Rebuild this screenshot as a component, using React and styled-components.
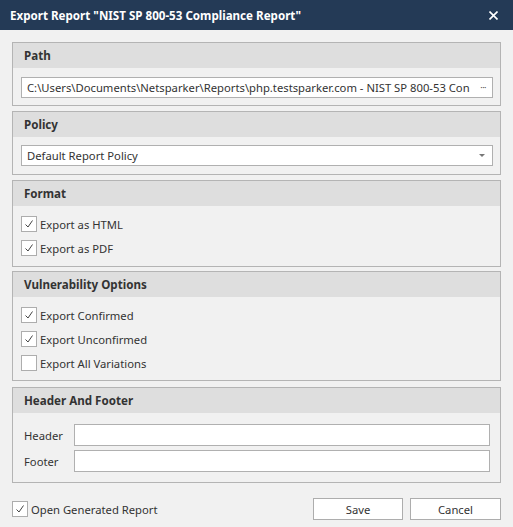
import React from "react";
import styled, { createGlobalStyle } from "styled-components";

const Global = createGlobalStyle`
  html, body { margin: 0; padding: 0; background: #f1f1f1; }
  body { font-family: "Segoe UI", "Noto Sans", "Open Sans", sans-serif; }
  * { box-sizing: border-box; }
`;

const Window = styled.div`
  width: 513px;
  height: 527px;
  background: #f1f1f1;
  display: flex;
  flex-direction: column;
  color: #333;
  font-size: 11.25px;
`;

const TitleBar = styled.div`
  height: 30px;
  flex: none;
  background: #243a56;
  color: #fff;
  display: flex;
  align-items: center;
  justify-content: space-between;
  padding: 0 15px 0 10px;
  font-weight: 700;
  font-size: 11.6px;
`;

const Close = styled.svg`
  width: 9px;
  height: 9px;
  display: block;
`;

const Body = styled.div`
  flex: none;
  padding: 12px 12px 0 12px;
  display: flex;
  flex-direction: column;
`;

const Panel = styled.section`
  border: 1px solid #b4b4b4;
  background: #f1f1f1;
  display: flex;
  flex-direction: column;
  margin-bottom: ${(p) => p.$after ?? 5}px;
`;

const PanelHeader = styled.div`
  height: 25px;
  background: #dedede;
  font-weight: 700;
  font-size: 11.6px;
  padding-left: 11px;
  display: flex;
  align-items: center;
`;

const PanelBody = styled.div`
  padding: ${(p) => p.$pad || "8px"};
  display: flex;
  flex-direction: column;
  gap: ${(p) => p.$gap || "0px"};
`;

const TextBox = styled.div`
  height: ${(p) => p.$h || 21}px;
  border: 1px solid #b0b0b0;
  background: #fff;
  display: flex;
  align-items: center;
  padding: 0 5px 0 5px;
  flex: ${(p) => (p.$grow ? 1 : "none")};
`;

const TextValue = styled.span`
  flex: 1;
  white-space: nowrap;
  color: #333;
`;

const Dots = styled.span`
  flex: none;
  color: #555;
  font-size: 9px;
  letter-spacing: -0.5px;
  line-height: 1;
  margin-right: 1px;
`;

const Arrow = styled.span`
  flex: none;
  width: 0;
  height: 0;
  border-left: 3px solid transparent;
  border-right: 3px solid transparent;
  border-top: 3px solid #777;
  margin-right: 2px;
`;

const CheckRow = styled.label`
  height: 24px;
  display: flex;
  align-items: center;
  gap: 3px;
`;

const Box = styled.span`
  width: 16px;
  height: 16px;
  border: 1px solid #adadad;
  background: #fff;
  display: flex;
  align-items: center;
  justify-content: center;
`;

const FieldRow = styled.div`
  display: flex;
  align-items: center;
  height: 22px;
`;

const FieldLabel = styled.span`
  width: 53px;
  padding-left: 3px;
`;

const Footer = styled.div`
  display: flex;
  align-items: center;
  justify-content: space-between;
  padding: 14px 12px 0 12px;
`;

const Buttons = styled.div`
  display: flex;
  gap: 7px;
`;

const Button = styled.button`
  width: ${(p) => p.$w || 90}px;
  height: 22px;
  border: 1px solid #adadad;
  background: #fff;
  font-family: inherit;
  font-size: 11.25px;
  color: #333;
  padding: 0;
`;

const Check = () => (
  <svg width="10" height="10" viewBox="0 0 10 10">
    <path d="M1.5 5.5 L4 8 L8.5 1.5" fill="none" stroke="#444" strokeWidth="1" />
  </svg>
);

const CheckBox = ({ checked, children }) => (
  <CheckRow>
    <Box>{checked && <Check />}</Box>
    <span>{children}</span>
  </CheckRow>
);

export default function App() {
  return (
    <Window>
      <Global />
      <TitleBar>
        <span>Export Report "NIST SP 800-53 Compliance Report"</span>
        <Close viewBox="0 0 9 9">
          <path d="M0.5 0.5 L8.5 8.5 M8.5 0.5 L0.5 8.5" stroke="#fff" strokeWidth="1.6" />
        </Close>
      </TitleBar>
      <Body>
        <Panel>
          <PanelHeader>Path</PanelHeader>
          <PanelBody $pad="9px 7px 7px 8px">
            <TextBox>
              <TextValue>
                C:\Users\Documents\Netsparker\Reports\php.testsparker.com - NIST SP 800-53 Con
              </TextValue>
              <Dots>···</Dots>
            </TextBox>
          </PanelBody>
        </Panel>
        <Panel>
          <PanelHeader>Policy</PanelHeader>
          <PanelBody $pad="8px 7px 8px 8px">
            <TextBox>
              <TextValue>Default Report Policy</TextValue>
              <Arrow />
            </TextBox>
          </PanelBody>
        </Panel>
        <Panel $after={4}>
          <PanelHeader>Format</PanelHeader>
          <PanelBody $pad="6px 8px 6px 8px">
            <CheckBox checked>Export as HTML</CheckBox>
            <CheckBox checked>Export as PDF</CheckBox>
          </PanelBody>
        </Panel>
        <Panel $after={6}>
          <PanelHeader>Vulnerability Options</PanelHeader>
          <PanelBody $pad="6px 8px 5px 8px">
            <CheckBox checked>Export Confirmed</CheckBox>
            <CheckBox checked>Export Unconfirmed</CheckBox>
            <CheckBox>Export All Variations</CheckBox>
          </PanelBody>
        </Panel>
        <Panel $after={0}>
          <PanelHeader>Header And Footer</PanelHeader>
          <PanelBody $pad="11px 10px 10px 8px" $gap="4px">
            <FieldRow>
              <FieldLabel>Header</FieldLabel>
              <TextBox $grow $h={22} />
            </FieldRow>
            <FieldRow>
              <FieldLabel>Footer</FieldLabel>
              <TextBox $grow $h={22} />
            </FieldRow>
          </PanelBody>
        </Panel>
      </Body>
      <Footer>
        <CheckBox checked>Open Generated Report</CheckBox>
        <Buttons>
          <Button $w={90}>Save</Button>
          <Button $w={91}>Cancel</Button>
        </Buttons>
      </Footer>
    </Window>
  );
}
